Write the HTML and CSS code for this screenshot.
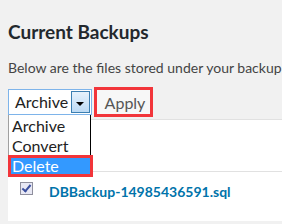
FILE: index.html
```html
<!DOCTYPE html>
<html lang="en">
<head>
    <meta charset="UTF-8">
    <title>Current Backups</title>
    <link rel="stylesheet" href="styles.css">
</head>
<body>
    <div class="wrap">
        <h2 class="title">Current Backups</h2>
        <p class="intro">Below are the files stored under your backup</p>

        <div class="actions">
            <div class="picker">
                <div class="select">
                    <span class="select-value">Archive</span>
                    <span class="select-arrow"></span>
                </div>
                <ul class="options">
                    <li>Archive</li>
                    <li>Convert</li>
                    <li class="picked">Delete</li>
                </ul>
            </div>
            <div class="marked">
                <button class="apply">Apply</button>
            </div>
        </div>

        <table class="backups">
            <thead>
                <tr><th></th><th></th></tr>
            </thead>
            <tbody>
                <tr>
                    <td class="check-cell"><span class="check"></span></td>
                    <td><a href="#" class="file">DBBackup-14985436591.sql</a></td>
                </tr>
            </tbody>
        </table>
    </div>
</body>
</html>
```

FILE: styles.css
```css
body {
    margin: 0;
    background: #f1f1f1;
    font-family: Lato, "Open Sans", sans-serif;
    color: #23282d;
    overflow: hidden;
}

.wrap {
    padding: 19px 0 0 8px;
}

.title {
    margin: 0;
    font-size: 19px;
    line-height: 25px;
    font-weight: 700;
}

.intro {
    margin: 14px 0 0;
    font-size: 14px;
    line-height: 20px;
    white-space: nowrap;
    color: #444;
}

.actions {
    display: flex;
    align-items: center;
    gap: 2px;
    margin-top: 9px;
    height: 30px;
}

.picker {
    position: relative;
    width: 84px;
    height: 26px;
}

.select {
    display: flex;
    height: 26px;
    box-sizing: border-box;
    border: 1px solid #7eb4ea;
    background: #fff;
}

.select-value {
    flex: 1;
    padding-left: 6px;
    font-size: 16px;
    line-height: 24px;
    color: #222;
}

.select-arrow {
    position: relative;
    width: 17px;
    margin: 1px;
    border: 1px solid #3c7fb1;
    background: linear-gradient(#e6f2fc, #bcdaf4);
}

.select-arrow::after {
    content: "";
    position: absolute;
    left: 4px;
    top: 10px;
    border-left: 4px solid transparent;
    border-right: 4px solid transparent;
    border-top: 4px solid #000;
}

.options {
    position: absolute;
    top: 26px;
    left: 0;
    z-index: 2;
    width: 83px;
    box-sizing: border-box;
    margin: 0;
    padding: 1px 0 0;
    list-style: none;
    background: #fff;
    border-left: 1px solid #a0a0a0;
    border-right: 1px solid #000;
}

.options li {
    padding-left: 3px;
    font-size: 16px;
    line-height: 19.5px;
    color: #222;
}

.options .picked {
    margin: 0 -3px 0 -1px;
    padding: 0 0 0 1px;
    line-height: 16px;
    border: 3px solid #f2353a;
    background: #3399ff;
    color: #fff;
}

.marked {
    border: 3px solid #f2353a;
}

.apply {
    display: block;
    width: 53px;
    height: 24px;
    margin: 0;
    padding: 0 0 0 3px;
    border: none;
    background: #f7f7f7;
    font-family: inherit;
    font-size: 16px;
    color: #555;
}

.backups {
    margin-top: 2px;
    width: 300px;
    border-collapse: collapse;
    background: #fff;
    border-top: 1px solid #e1e1e1;
}

.backups thead th {
    height: 51px;
    padding: 0;
    border-bottom: 1px solid #e1e1e1;
}

.backups td {
    padding: 9px 0 20px;
    vertical-align: top;
}

.check-cell {
    width: 41px;
}

.check {
    display: block;
    width: 11px;
    height: 11px;
    margin: 1px 0 0 12px;
    border: 1px solid #8f8f9d;
    background: #e8e8f4;
    position: relative;
}

.check::after {
    content: "";
    position: absolute;
    left: 3px;
    top: 0;
    width: 3px;
    height: 7px;
    border-right: 2px solid #3b4f9e;
    border-bottom: 2px solid #3b4f9e;
    transform: rotate(40deg);
}

.file {
    font-size: 14px;
    font-weight: 700;
    color: #0073aa;
    text-decoration: none;
    line-height: 18px;
}
```
